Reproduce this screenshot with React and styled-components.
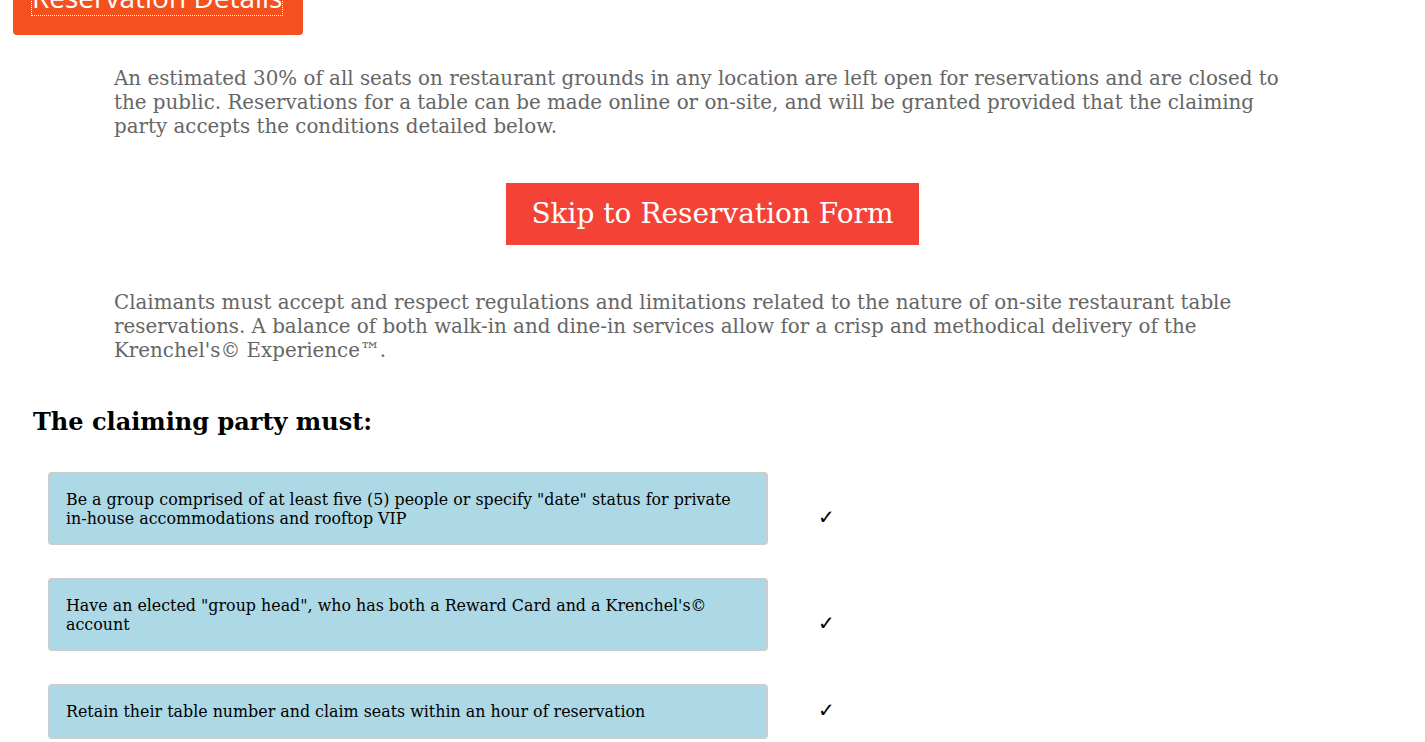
import React from 'react'
import styled, { createGlobalStyle } from 'styled-components'

const GlobalStyle = createGlobalStyle`
  html, body {
    margin: 0;
    padding: 0;
    background: #fff;
  }
  body {
    font-family: "DejaVu Serif", serif;
    overflow: hidden;
  }
`

const Page = styled.div`
  margin-top: -40px;
  padding-bottom: 40px;
`

const DetailsButton = styled.button`
  display: block;
  margin-left: 13px;
  width: 290px;
  padding: 19px 19px 20px;
  border: none;
  border-radius: 4px;
  background: #f4511e;
  color: #fff;
  font-family: "Open Sans", sans-serif;
  font-size: 28px;
  line-height: 36px;
  text-align: left;
  cursor: pointer;
`

const FocusRing = styled.span`
  display: inline-block;
  outline: 1px dotted #fff;
  white-space: nowrap;
`

const Text = styled.p`
  margin: ${p => p.$top}px 114px 0;
  color: #666;
  font-size: 19.85px;
  line-height: 24px;
`

const Center = styled.div`
  display: flex;
  justify-content: center;
  margin-top: 44px;
`

const SkipButton = styled.a`
  display: inline-block;
  padding: 14px 25px 15px;
  background: #f44336;
  color: #fff;
  font-size: 28px;
  line-height: 33px;
  text-decoration: none;
  cursor: pointer;
`

const Heading = styled.h2`
  margin: 45px 0 0 33px;
  font-size: 24px;
  line-height: 28px;
  font-weight: bold;
  color: #000;
`

const List = styled.div`
  margin: 36px 0 0 48px;
  display: flex;
  flex-direction: column;
  gap: 33px;
`

const Row = styled.div`
  display: flex;
  align-items: last baseline;
  gap: 50px;
`

const Card = styled.div`
  box-sizing: border-box;
  width: 720px;
  padding: 17px 16px 15px;
  background: #add8e6;
  border: 2px solid #ccc;
  border-radius: 4px;
  color: #000;
  font-size: 15.87px;
  line-height: 18.5px;
`

const Check = styled.span`
  font-family: "DejaVu Sans", sans-serif;
  font-size: 20px;
  color: #000;
`

const rules = [
  'Be a group comprised of at least five (5) people or specify "date" status for private in-house accommodations and rooftop VIP',
  'Have an elected "group head", who has both a Reward Card and a Krenchel\'s\u00a9 account',
  'Retain their table number and claim seats within an hour of reservation',
]

const App = () => {
  return (
    <>
      <GlobalStyle />
      <Page>
        <DetailsButton>
          <FocusRing>Reservation Details</FocusRing>
        </DetailsButton>
        <Text $top={32}>
          An estimated 30% of all seats on restaurant grounds in any location are left open for reservations and are closed to
          the public. Reservations for a table can be made online or on-site, and will be granted provided that the claiming
          party accepts the conditions detailed below.
        </Text>
        <Center>
          <SkipButton>Skip to Reservation Form</SkipButton>
        </Center>
        <Text $top={46}>
          Claimants must accept and respect regulations and limitations related to the nature of on-site restaurant table
          reservations. A balance of both walk-in and dine-in services allow for a crisp and methodical delivery of the
          Krenchel's© Experience™.
        </Text>
        <Heading>The claiming party must:</Heading>
        <List>
          {rules.map(r => (
            <Row key={r}>
              <Card>{r}</Card>
              <Check>✓</Check>
            </Row>
          ))}
        </List>
      </Page>
    </>
  )
}

export default App
